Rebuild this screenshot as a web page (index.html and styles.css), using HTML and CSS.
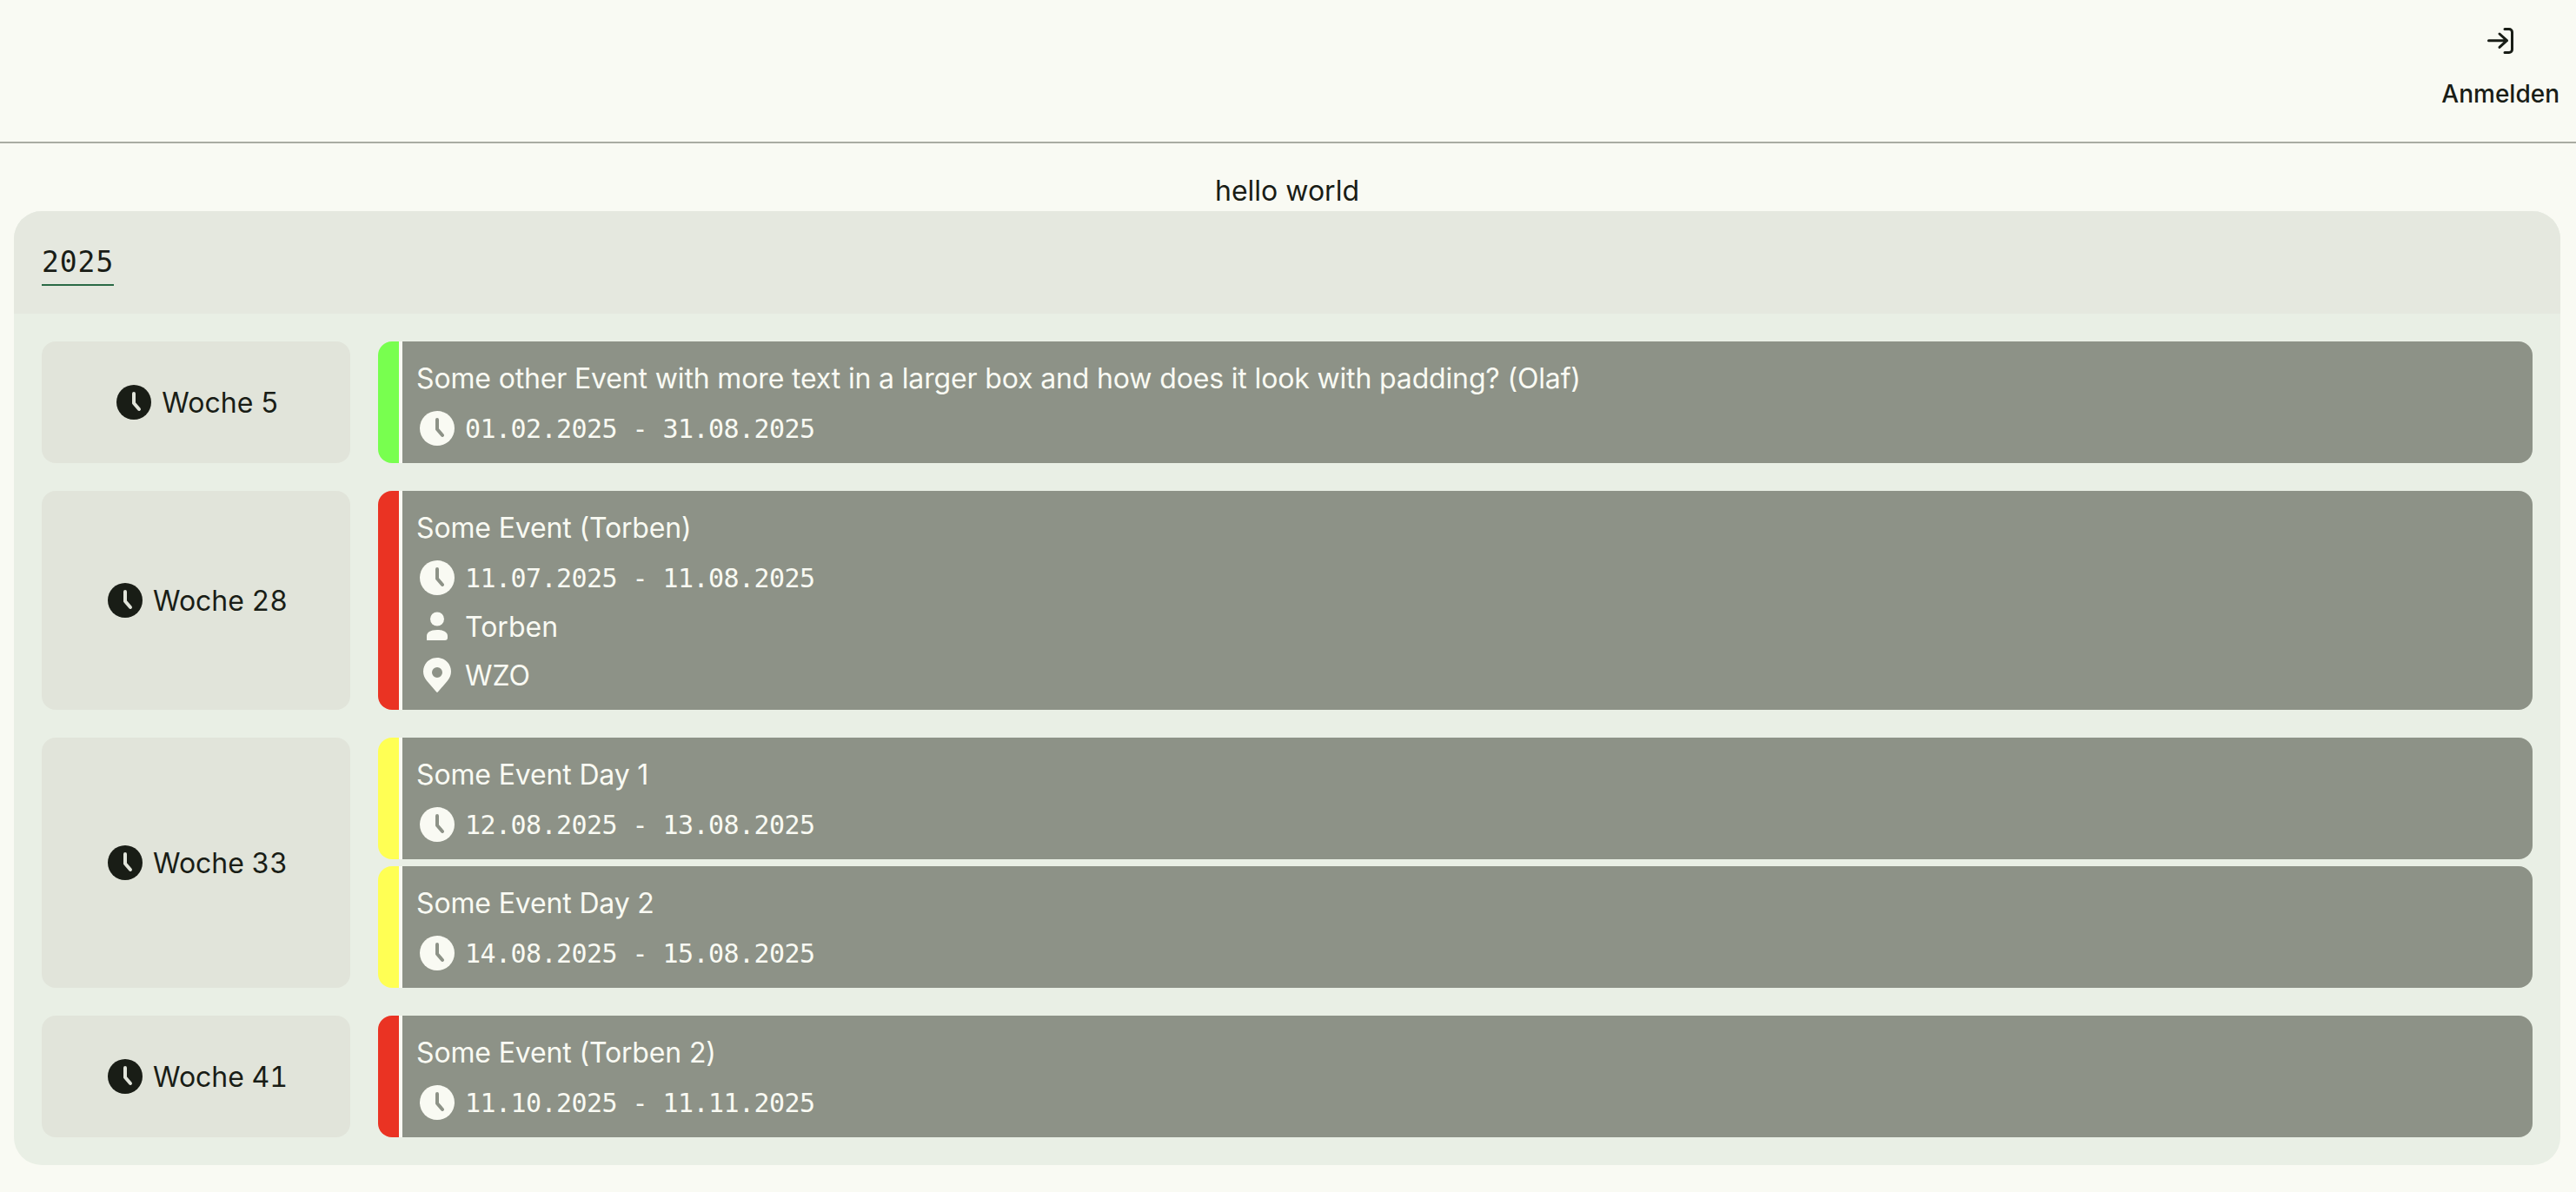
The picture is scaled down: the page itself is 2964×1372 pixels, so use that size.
FILE: index.html
```html
<!DOCTYPE html>
<html lang="de">
  <head>
    <meta charset="UTF-8" />
    <title>Kalender</title>
    <link rel="stylesheet" href="styles.css">
  </head>

  <body>
    <svg class="defs" width="0" height="0">
      <symbol id="clock" viewBox="0 0 40 40">
        <circle cx="20" cy="20" r="20" fill="currentColor" />
        <path d="M20 10v11l6 7" fill="none" stroke="var(--hand)" stroke-width="4" stroke-linecap="round" stroke-linejoin="round" />
      </symbol>
      <symbol id="person" viewBox="0 0 40 40">
        <circle cx="20" cy="11.5" r="8" fill="currentColor" />
        <path d="M8 36v-5c0-4 4-7 12-7s12 3 12 7v2c0 2-1 3-3 3z" fill="currentColor" />
      </symbol>
      <symbol id="pin" viewBox="0 0 40 40">
        <path fill-rule="evenodd" d="M20 0c9 0 16 7 16 16 0 4-1.500 7-4 10.500L20.800 39.500c-.4.5-1.200.5-1.600 0L8 26.500C5.500 23 4 20 4 16 4 7 11 0 20 0zm0 11a6 6 0 1 0 0 12 6 6 0 0 0 0-12z" fill="currentColor" />
      </symbol>
    </svg>

    <header class="topbar">
      <button class="login">
        <svg class="login-icon" viewBox="0 0 30 30" width="30" height="30">
          <path d="M1.500 14.700h21M14 7l8.500 7.700-8.500 7.700M20 1.500h5c2 0 3.500 1.500 3.500 3.500v20c0 2-1.500 3.500-3.500 3.500h-5" fill="none" stroke="currentColor" stroke-width="3" stroke-linecap="round" stroke-linejoin="round" />
        </svg>
        <span>Anmelden</span>
      </button>
    </header>

    <main>
      <h1 class="greeting">hello world</h1>

      <section class="year">
        <div class="year-head">
          <span class="year-tab">2025</span>
        </div>

        <div class="weeks">
          <div class="week">
            <div class="week-label">
              <svg class="icon-clock"><use href="#clock" /></svg>
              <span>Woche 5</span>
            </div>
            <div class="events">
              <article class="event green">
                <div class="event-body">
                  <p class="event-title">Some other Event with more text in a larger box and how does it look with padding? (Olaf)</p>
                  <p class="event-row mono"><svg class="icon"><use href="#clock" /></svg>01.02.2025 - 31.08.2025</p>
                </div>
              </article>
            </div>
          </div>

          <div class="week">
            <div class="week-label">
              <svg class="icon-clock"><use href="#clock" /></svg>
              <span>Woche 28</span>
            </div>
            <div class="events">
              <article class="event red">
                <div class="event-body">
                  <p class="event-title">Some Event (Torben)</p>
                  <p class="event-row mono"><svg class="icon"><use href="#clock" /></svg>11.07.2025 - 11.08.2025</p>
                  <p class="event-row"><svg class="icon"><use href="#person" /></svg>Torben</p>
                  <p class="event-row"><svg class="icon"><use href="#pin" /></svg>WZO</p>
                </div>
              </article>
            </div>
          </div>

          <div class="week">
            <div class="week-label">
              <svg class="icon-clock"><use href="#clock" /></svg>
              <span>Woche 33</span>
            </div>
            <div class="events">
              <article class="event yellow">
                <div class="event-body">
                  <p class="event-title">Some Event Day 1</p>
                  <p class="event-row mono"><svg class="icon"><use href="#clock" /></svg>12.08.2025 - 13.08.2025</p>
                </div>
              </article>
              <article class="event yellow">
                <div class="event-body">
                  <p class="event-title">Some Event Day 2</p>
                  <p class="event-row mono"><svg class="icon"><use href="#clock" /></svg>14.08.2025 - 15.08.2025</p>
                </div>
              </article>
            </div>
          </div>

          <div class="week">
            <div class="week-label">
              <svg class="icon-clock"><use href="#clock" /></svg>
              <span>Woche 41</span>
            </div>
            <div class="events">
              <article class="event red">
                <div class="event-body">
                  <p class="event-title">Some Event (Torben 2)</p>
                  <p class="event-row mono"><svg class="icon"><use href="#clock" /></svg>11.10.2025 - 11.11.2025</p>
                </div>
              </article>
            </div>
          </div>
        </div>
      </section>
    </main>
  </body>
</html>
```

FILE: styles.css
```css
* {
  box-sizing: border-box;
}

body {
  margin: 0;
  background-color: #f9faf3;
  color: #191d16;
  font-family: Inter, "Liberation Sans", sans-serif;
  font-size: 32px;
}

.defs {
  position: absolute;
}

.topbar {
  display: flex;
  justify-content: flex-end;
  height: 165px;
  border-bottom: 2px solid #a9aca2;
  padding-right: 19px;
}

.login {
  display: flex;
  flex-direction: column;
  align-items: center;
  gap: 28px;
  padding: 32px 0 0;
  border: 0;
  background: none;
  color: inherit;
  font-family: inherit;
  font-size: 28px;
  font-weight: 500;
  line-height: 36px;
}

.login-icon {
  display: block;
}

main {
  padding: 0 18px 31px 16px;
}

.greeting {
  margin: 0;
  padding-top: 31px;
  font-size: 32px;
  font-weight: 400;
  line-height: 47px;
  text-align: center;
}

.year {
  border-radius: 32px;
  overflow: hidden;
  background-color: #e9efe5;
}

.year-head {
  height: 118px;
  padding: 30px 32px 0;
  background-color: #e5e8df;
}

.year-tab {
  display: inline-block;
  height: 56px;
  border-bottom: 2px solid #2a6a45;
  font-family: "DejaVu Sans Mono", monospace;
  font-size: 33px;
  letter-spacing: 0.93px;
  line-height: 58px;
}

.weeks {
  display: flex;
  flex-direction: column;
  gap: 32px;
  padding: 32px;
}

.week {
  display: grid;
  grid-template-columns: 355px 1fr;
  gap: 32px;
}

.week-label {
  display: flex;
  align-items: center;
  justify-content: center;
  gap: 12px;
  padding-left: 4px;
  border-radius: 16px;
  background-color: #e1e4da;
  font-variant-numeric: tabular-nums;
  --hand: #e1e4da;
}

.icon-clock {
  width: 40px;
  height: 40px;
}

.events {
  display: flex;
  flex-direction: column;
  gap: 8px;
}

.event {
  display: flex;
  border-radius: 16px;
  overflow: hidden;
  border-left: 24px solid;
}

.green {
  border-left-color: #78ff4f;
}

.red {
  border-left-color: #ea3323;
}

.yellow {
  border-left-color: #ffff54;
}

.event-body {
  flex: 1;
  padding: 12px 16px;
  border-left: 4px solid #f9faf3;
  background-color: #8d9287;
  color: #f9faf3;
  --hand: #8d9287;
}

.event-title {
  margin: 0;
  font-size: 32px;
  letter-spacing: -0.15px;
  line-height: 61px;
  height: 60px;
}

.event-row {
  display: flex;
  align-items: center;
  gap: 8px;
  height: 56px;
  margin: 0;
  font-size: 32px;
}

.mono {
  font-family: "DejaVu Sans Mono", monospace;
  font-size: 30px;
  letter-spacing: -0.56px;
}

.icon {
  width: 40px;
  height: 40px;
  margin: 0 4px;
}
```
